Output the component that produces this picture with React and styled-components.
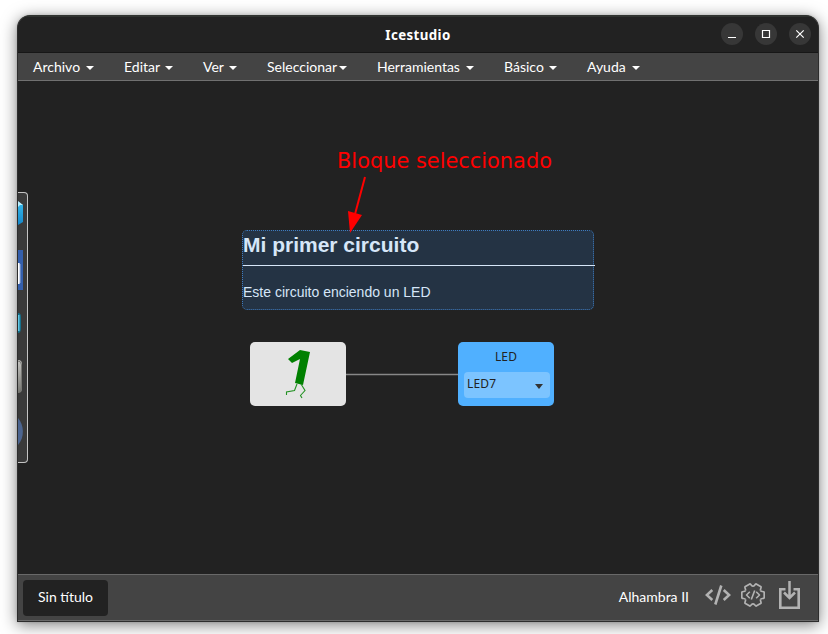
import React from 'react';
import styled, { createGlobalStyle } from 'styled-components';

const GlobalStyle = createGlobalStyle`
  * { box-sizing: border-box; }
  html, body { margin: 0; background: #fff; overflow: hidden; }
`;

const Desktop = styled.div`
  width: 828px;
  height: 634px;
  padding: 15px 9px 12px 17px;
  overflow: hidden;
  background: #fff;
`;

const Window = styled.main`
  height: 607px;
  display: flex;
  flex-direction: column;
  overflow: hidden;
  border: 1px solid #2d2d2d;
  border-top-color: #303330;
  border-radius: 13px 13px 0 0;
  background: #222;
  color: #fff;
  font-family: Lato, sans-serif;
  font-size: 14px;
  box-shadow: 0 3px 16px rgba(0, 0, 0, 0.5), 0 0 3px rgba(0, 0, 0, 0.15);
`;

const TitleBar = styled.header`
  flex: 0 0 37px;
  display: grid;
  grid-template-columns: 1fr auto 1fr;
  align-items: center;
  border-top: 1px solid #303330;
  border-bottom: 1px solid #171717;
`;

const Title = styled.h1`
  grid-column: 2;
  margin: 1px 0 0;
  font: 700 13.3px/20px "Noto Sans", sans-serif;
  letter-spacing: 0.4px;
`;

const Controls = styled.div`
  display: flex;
  justify-content: flex-end;
  gap: 12px;
  margin-top: -1px;
  padding-right: 7px;
`;

const Control = styled.button`
  width: 22px;
  height: 22px;
  padding: 0;
  border: 0;
  border-radius: 50%;
  background: #373737;
  svg { display: block; }
`;

const MenuBar = styled.nav`
  flex: 0 0 28px;
  display: flex;
  padding-left: 15px;
  border-bottom: 1px solid #717171;
  background: #444;
`;

const MenuItem = styled.div`
  width: ${(p) => p.$width}px;
  height: 28px;
  margin-bottom: -1px;
  padding-right: 30px;
  display: flex;
  align-items: center;
  justify-content: space-between;
  line-height: 28px;
  white-space: nowrap;
`;

const Caret = styled.span`
  margin-top: 2px;
  border: 4px solid transparent;
  border-top-color: ${(p) => p.$color || '#fff'};
  border-bottom: 0;
`;

const Canvas = styled.section`
  flex: 1;
  position: relative;
  overflow: hidden;
`;

const Dock = styled.aside`
  position: absolute;
  left: 0;
  top: 111px;
  width: 10px;
  height: 271px;
  border: 1px solid #c4c4c4;
  border-left: 0;
  border-radius: 0 4px 4px 0;
  background: #3a3a3a;
  svg { display: block; }
`;

const Note = styled.article`
  position: absolute;
  left: 224px;
  top: 149px;
  width: 352px;
  height: 80px;
  border: 1px dotted #3f7cc0;
  border-radius: 5px;
  background: #243344;
  color: #d6e6f8;
  font-family: "Liberation Sans", sans-serif;
`;

const NoteTitle = styled.h2`
  width: 352px;
  height: 35px;
  margin: 0;
  padding-top: 1px;
  border-bottom: 1px solid #d6e6f8;
  font-size: 21px;
  line-height: 25px;
`;

const NoteText = styled.p`
  margin: 18px 0 0;
  font-size: 14px;
  line-height: 17px;
`;

const Annotation = styled.div`
  position: absolute;
  left: 319px;
  top: 67px;
  color: #f00;
  font: 20.9px/26px "DejaVu Sans", sans-serif;
  white-space: nowrap;
`;

const Arrow = styled.svg`
  position: absolute;
  left: 322px;
  top: 94px;
`;

const Wire = styled.div`
  position: absolute;
  left: 328px;
  top: 292px;
  width: 112px;
  height: 3px;
  border: solid #3a3a3a;
  border-width: 1px 0;
  background: #888;
`;

const Block = styled.div`
  position: absolute;
  left: ${(p) => p.$left}px;
  top: 261px;
  width: 96px;
  height: 64px;
  border-radius: 5px;
  background: ${(p) => p.$color};
  color: #222;
  font: 12px/16px "Noto Sans", sans-serif;
  letter-spacing: 0.15px;
  svg { display: block; }
`;

const BlockLabel = styled.div`
  height: 30px;
  padding-top: 7px;
  text-align: center;
`;

const Select = styled.div`
  height: 26px;
  margin: 0 4px 0 6px;
  padding: 0 7px 2px 3px;
  display: flex;
  align-items: center;
  justify-content: space-between;
  border-radius: 4px;
  background: #7cc4ff;
`;

const SelectCaret = styled(Caret)`
  margin-top: 5px;
  border-top-width: 5px;
`;

const StatusBar = styled.footer`
  flex: 0 0 47px;
  display: flex;
  align-items: center;
  padding: 0 18px 0 5px;
  border: solid #696969;
  border-width: 1px 0;
  background: #444;
`;

const Tab = styled.div`
  width: 85px;
  height: 36px;
  margin-top: 1px;
  border-radius: 4px;
  background: #222;
  line-height: 34px;
  text-align: center;
`;

const Board = styled.span`
  margin: -2px 16px 0 auto;
`;

const Tools = styled.div`
  display: flex;
  align-items: center;
  margin-top: -5px;
  svg { display: block; }
`;

const CodeIcon = styled.svg`
  margin-right: 10px;
`;

const GearIcon = styled.svg`
  margin-right: 14px;
`;

const menus = [
  ['Archivo', 91], ['Editar', 79], ['Ver', 64], ['Seleccionar', 110],
  ['Herramientas', 127], ['Básico', 83], ['Ayuda', 83],
];

const controls = [
  ['Minimizar', 'M7 14.5h8'],
  ['Maximizar', 'M7.5 7.5h7v7h-7z'],
  ['Cerrar', 'M7.3 7.3l7.4 7.4M14.7 7.3l-7.4 7.4'],
];

const DockIcons = () => (
  <svg width="9" height="269" viewBox="0 0 9 269">
    <defs>
      <linearGradient id="cyan" x2="0" y2="1">
        <stop stopColor="#36b9e9" /><stop offset="1" stopColor="#1688cb" />
      </linearGradient>
      <linearGradient id="silver" x2="0" y2="1">
        <stop stopColor="#c4c4c1" /><stop offset="1" stopColor="#777772" />
      </linearGradient>
    </defs>
    <path d="M0 9l5 3v17l-5 3z" fill="url(#cyan)" />
    <path d="M0 8l5 4H2l-2 2z" fill="#b9efff" />
    <path d="M0 57h5v40H0z" fill="#345fac" />
    <path d="M0 70h1q1 0 1 2v17q0 2-1 2H0z" fill="#fff" />
    <path d="M2 71v19" stroke="#9cb1d8" />
    <path d="M0 120q3 0 3 4v11q0 5-3 5z" fill="#16718c" />
    <path d="M0 122h1.500v16H0z" fill="#62c8e5" />
    <path d="M0 167q4 0 4 4v25q0 4-4 4z" fill="url(#silver)" />
    <path d="M0 168q3.500 0 3.500 4v23q0 4-3.500 4" fill="none" stroke="#777773" />
    <path d="M0 225c6 7 7 19 0 27z" fill="#4c6590" />
  </svg>
);

const RunningOne = () => (
  <svg width="96" height="64" viewBox="0 0 96 64">
    <path d="M50 8l10 2-7 33-8-2 5-24-8 4-4-4z" fill="#008000" />
    <path d="M47 42l-2.500 6.500-8 1.500v3M51 42l4 6.500-4.500 5 1.500 2.500" fill="none" stroke="#229122" strokeWidth="1.100" />
  </svg>
);

const lobeAngles = [0, 60, 120, 180, 240, 300];

const StatusIcons = () => (
  <Tools>
    <CodeIcon width="26" height="28" viewBox="0 0 26 28" fill="none" stroke="#b2b2b2" strokeWidth="2.600">
      <path d="M7.300 9L1.800 14l5.500 5M18.700 9l5.500 5-5.500 5M16.300 4.500L10.300 23.500" />
    </CodeIcon>
    <GearIcon width="24" height="28" viewBox="-12 -14 24 28" fill="none" stroke="#b2b2b2" strokeLinejoin="round">
      {lobeAngles.map((angle) => (
        <path
          key={angle}
          transform={`rotate(${angle})`}
          d="M7.600-4.400C8.400-3 10-4 11.200-2.800V2.800C10 4 8.400 3 7.600 4.400"
          strokeWidth="1.700"
        />
      ))}
      <path d="M-3.200-3.200L-6.500 0l3.300 3.200M3.200-3.200L6.500 0 3.200 3.200M1.700-4.500l-3.400 9" strokeWidth="1.600" />
    </GearIcon>
    <svg width="21" height="28" viewBox="0 0 21 28" fill="none" stroke="#b2b2b2">
      <path d="M6.500 8.300H1.300v18.400h18.400V8.300h-5.200" strokeWidth="2.600" />
      <path d="M10.500 0v17M5 11.500l5.500 5.500 5.500-5.500" strokeWidth="2.500" />
    </svg>
  </Tools>
);

export default function App() {
  return (
    <>
      <GlobalStyle />
      <Desktop>
        <Window>
          <TitleBar>
            <Title>Icestudio</Title>
            <Controls>
              {controls.map(([label, path]) => (
                <Control key={label} aria-label={label}>
                  <svg width="22" height="22" fill="none" stroke="#fff" strokeWidth="1.200"><path d={path} /></svg>
                </Control>
              ))}
            </Controls>
          </TitleBar>
          <MenuBar>
            {menus.map(([label, width]) => (
              <MenuItem key={label} $width={width}>{label}<Caret /></MenuItem>
            ))}
          </MenuBar>
          <Canvas>
            <Dock><DockIcons /></Dock>
            <Note>
              <NoteTitle>Mi primer circuito</NoteTitle>
              <NoteText>Este circuito enciendo un LED</NoteText>
            </Note>
            <Annotation>Bloque seleccionado</Annotation>
            <Arrow width="34" height="60">
              <path d="M25 2L14.500 41" stroke="#f00" strokeWidth="2" />
              <path d="M8 36l14 4-12 18z" fill="#f00" />
            </Arrow>
            <Wire />
            <Block $left={232} $color="#e4e4e4"><RunningOne /></Block>
            <Block $left={440} $color="#50b0ff">
              <BlockLabel>LED</BlockLabel>
              <Select>LED7<SelectCaret $color="#333" /></Select>
            </Block>
          </Canvas>
          <StatusBar>
            <Tab>Sin título</Tab>
            <Board>Alhambra II</Board>
            <StatusIcons />
          </StatusBar>
        </Window>
      </Desktop>
    </>
  );
}
